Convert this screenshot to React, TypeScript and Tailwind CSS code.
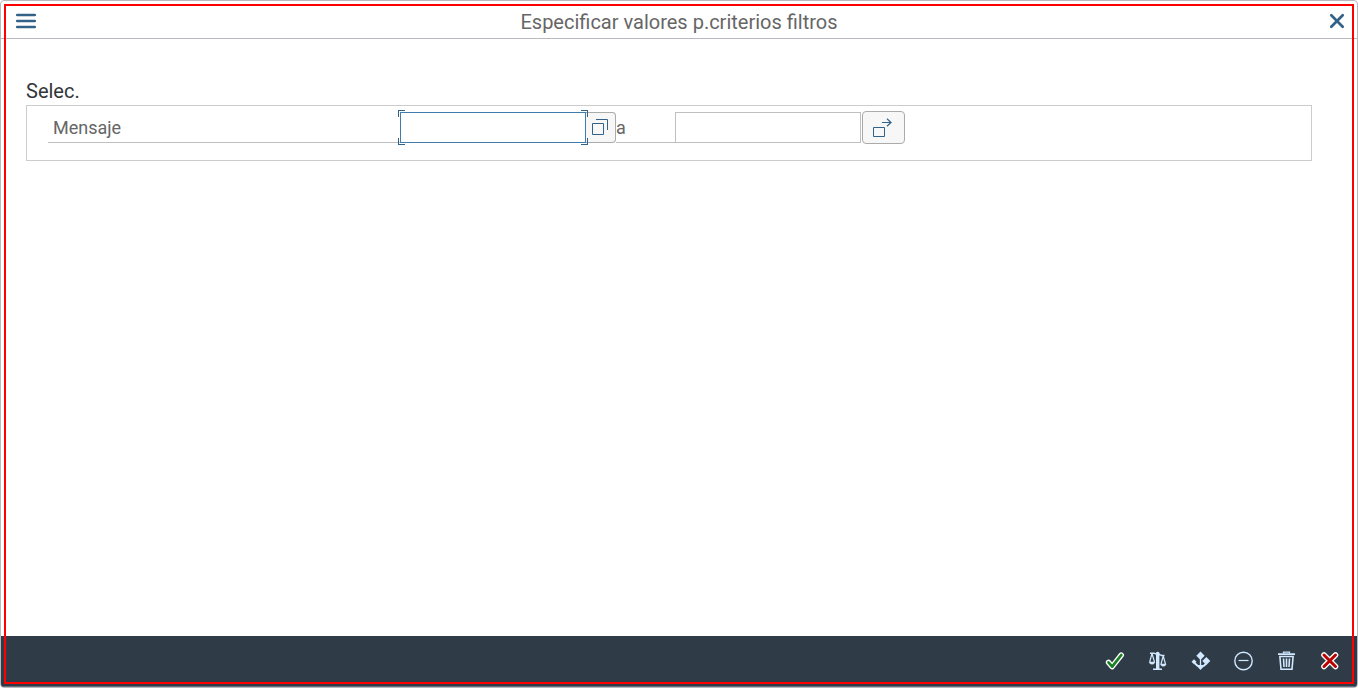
import type { ReactNode } from "react";

function CheckIcon() {
  return (
    <svg width="20" height="20" viewBox="0 0 20 20" fill="none" strokeLinejoin="round" strokeLinecap="round" aria-hidden="true">
      <path d="M3.500 11.400 7.200 15.600 16.300 4" stroke="#fff" strokeWidth="5.400" />
      <path d="M3.500 11.400 7.200 15.600 16.300 4" stroke="#198024" strokeWidth="2.800" />
    </svg>
  );
}

function ScaleIcon() {
  return (
    <svg width="20" height="20" viewBox="0 0 20 20" fill="none" stroke="#d1e8ff" aria-hidden="true">
      <path d="M2 2.200h4.200c1 0 1.300 1 3.300 1s2.400.7 4 1.300h3" strokeWidth="1.400" />
      <circle cx="9.700" cy="2.600" r="1.900" fill="#d1e8ff" stroke="none" />
      <path d="M8 4h3.400v13.400h2.600v1.600H5v-1.600h3z" fill="#d1e8ff" stroke="none" />
      <path d="M4 2.500 1.700 11M4 2.500 6.500 11M15.200 5 13 13M15.200 5 17.500 13" strokeWidth="1.200" />
      <path d="M1.300 11h5.500c0 3-5.500 3-5.500 0zM12.600 13h5.400c0 3-5.400 3-5.400 0z" fill="#d1e8ff" strokeWidth=".5" />
    </svg>
  );
}

function VariantIcon() {
  return (
    <svg width="20" height="20" viewBox="0 0 20 20" fill="none" aria-hidden="true">
      <path d="M9.500.5 13.700 4.700 9.500 8.900 5.300 4.700zM15.300 6 19.300 10 15.300 14 11.300 10zM3 8.300 5.500 10.800 3 13.300.5 10.800zM4.800 14h9.400L9.500 19z" fill="#d1e8ff" />
      <path d="M9.500 8v7" stroke="#d1e8ff" strokeWidth="1.300" />
      <path d="M3.500 12 6.800 15M15.300 12.500l-3 2.700" stroke="#d1e8ff" strokeWidth="2" />
    </svg>
  );
}

function MinusCircleIcon() {
  return (
    <svg width="20" height="20" viewBox="0 0 20 20" fill="none" stroke="#d1e8ff" strokeWidth="1.400" aria-hidden="true">
      <circle cx="9.500" cy="10" r="8.700" />
      <path d="M4.500 9.500h10" strokeWidth="1.200" />
    </svg>
  );
}

function TrashIcon() {
  return (
    <svg width="20" height="20" viewBox="0 0 20 20" fill="none" stroke="#d1e8ff" aria-hidden="true">
      <path d="M1 3.200h17" strokeWidth="1.700" />
      <path d="M6.500 2.500V1.200h6v1.300" strokeWidth="1.300" />
      <path d="M2.900 5.500h13.200L15 18.200H4z" strokeWidth="1.600" />
      <path d="M6.500 7.500l.5 8.500M9.500 7.500V16M12.500 7.500 12 16" strokeWidth="1.600" />
    </svg>
  );
}

function CancelIcon() {
  return (
    <svg width="20" height="20" viewBox="0 0 20 20" fill="none" strokeLinecap="round" aria-hidden="true">
      <path d="M4 4l11.500 11.500M15.500 4 4 15.500" stroke="#fff" strokeWidth="5.600" />
      <path d="M4 4l11.500 11.500M15.500 4 4 15.500" stroke="#b00" strokeWidth="3" />
    </svg>
  );
}

function ValueHelpIcon() {
  return (
    <svg width="18" height="18" viewBox="0 0 18 18" fill="none" stroke="#346187" aria-hidden="true">
      <path d="M1.500 5.500h11v11h-11z" />
      <path d="M5 1.500h11.500V12" />
    </svg>
  );
}

function MultipleIcon() {
  return (
    <svg width="20" height="20" viewBox="0 0 20 20" fill="none" stroke="#346187" aria-hidden="true">
      <path d="M1.500 9.500h11v9h-11z" />
      <path d="M10 4.500h9M15 .8l4 3.700-4 3.700" strokeWidth="1.200" />
    </svg>
  );
}

const corners = [
  "left-0 top-0 border-l border-t",
  "right-0 top-0 border-r border-t",
  "bottom-0 left-0 border-b border-l",
  "bottom-0 right-0 border-b border-r",
];

const actions: { label: string; icon: ReactNode }[] = [
  { label: "Continuar", icon: <CheckIcon /> },
  { label: "Verificar", icon: <ScaleIcon /> },
  { label: "Selección múltiple", icon: <VariantIcon /> },
  { label: "Excluir", icon: <MinusCircleIcon /> },
  { label: "Borrar", icon: <TrashIcon /> },
  { label: "Cancelar", icon: <CancelIcon /> },
];

export default function App() {
  return (
    <div className="relative flex min-h-screen flex-col overflow-hidden rounded-sm border border-[#b8b8be] bg-white font-['Roboto',sans-serif] text-[#666]">
      <header className="grid grid-cols-[48px_1fr_48px] items-center border-b border-[#b8b8be]">
        <button type="button" aria-label="Menú" className="flex h-[37px] items-center pl-[15px] pt-0.5">
          <svg width="20" height="16" viewBox="0 0 20 16" stroke="#346187" strokeWidth="2.500" strokeLinecap="round" aria-hidden="true">
            <path d="M1.200 2h17.600M1.200 8h17.600M1.200 14h17.600" />
          </svg>
        </button>
        <h1 className="pt-1 text-center text-xl leading-8">Especificar valores p.criterios filtros</h1>
        <button type="button" aria-label="Cerrar" className="flex h-[37px] items-center justify-end pr-3 pt-0.5">
          <svg width="16" height="16" viewBox="0 0 16 16" stroke="#346187" strokeWidth="2.700" strokeLinecap="round" aria-hidden="true">
            <path d="M2.300 2.300l11.400 11.400M13.700 2.300 2.300 13.700" />
          </svg>
        </button>
      </header>

      <main className="flex-1 pl-[25px] pr-[45px] pt-[38px]">
        <h2 className="text-xl leading-7 text-[#32363a]">Selec.</h2>
        <div className="flex h-14 items-start border border-[#ccc] pl-[21px] pt-[5px] text-lg">
          <div className="flex h-[33px] items-center">
            <label htmlFor="from" className="h-[31px] w-[352px] border-b border-[#bfbfbf] pl-[5px] leading-8">
              Mensaje
            </label>
            <div className="relative">
              <input
                id="from"
                type="text"
                className="block h-[31px] w-[186px] border border-[#427cac] bg-white px-1 text-[#32363a] outline-none"
              />
              <div className="pointer-events-none absolute -inset-0.5">
                {corners.map((corner) => (
                  <span key={corner} className={`absolute size-[7px] border-[#346187] ${corner}`} />
                ))}
              </div>
            </div>
            <button
              type="button"
              aria-label="Ayuda para entradas"
              className="flex h-[31px] w-[30px] items-center justify-center rounded-r-sm border border-l-0 border-[#ababab] bg-[#f7f7f7] pb-0.5 pr-0.5"
            >
              <ValueHelpIcon />
            </button>
            <label htmlFor="to" className="h-[31px] w-[59px] border-b border-[#bfbfbf] leading-8">
              a
            </label>
            <input
              id="to"
              type="text"
              className="block h-[31px] w-[186px] border border-[#bfbfbf] bg-white px-1 text-[#32363a] outline-none"
            />
            <button
              type="button"
              aria-label="Selección múltiple"
              className="ml-px flex h-[33px] w-[43px] items-center justify-center rounded-sm border border-[#ababab] bg-[#f7f7f7] pr-1"
            >
              <MultipleIcon />
            </button>
          </div>
        </div>
      </main>

      <footer className="flex h-[51px] items-center justify-end border-b border-[#64707c] bg-[#2f3c48] pr-1.5">
        {actions.map(({ label, icon }) => (
          <button key={label} type="button" aria-label={label} className="flex h-9 w-[43px] items-center justify-center">
            {icon}
          </button>
        ))}
      </footer>

      <div className="pointer-events-none absolute inset-[3px] border-2 border-[#f00]" />
    </div>
  );
}
